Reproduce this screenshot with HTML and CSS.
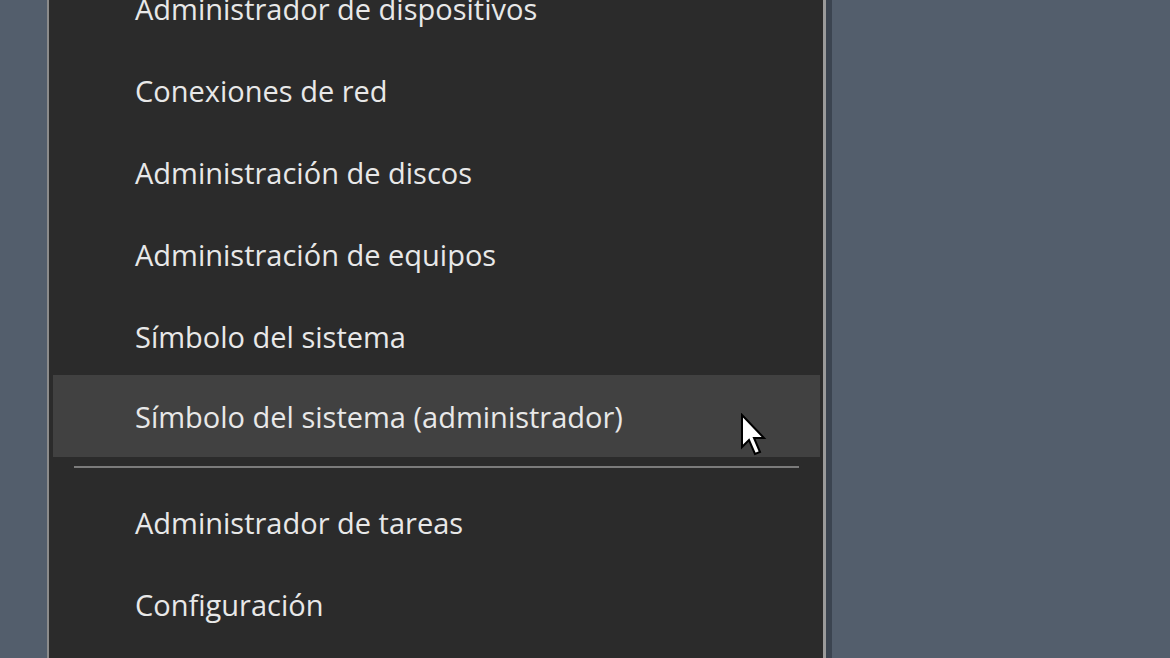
FILE: index.html
```html
<!DOCTYPE html>
<html lang="es">
<head>
<meta charset="utf-8">
<link rel="stylesheet" href="styles.css">
</head>
<body>
<div class="menu">
  <ul class="list">
    <li class="item">Administrador de dispositivos</li>
    <li class="item">Conexiones de red</li>
    <li class="item">Administración de discos</li>
    <li class="item">Administración de equipos</li>
    <li class="item">Símbolo del sistema</li>
    <li class="item hover">Símbolo del sistema (administrador)
      <svg class="cursor" width="30" height="46" viewBox="0 0 15 23">
        <path d="M1 1 L1 17 L4.5 13.5 L7.5 20.5 L10 19.5 L7 12.5 L12 12.5 Z" fill="#fff" stroke="#000" stroke-width="1" stroke-linejoin="miter"/>
      </svg>
    </li>
  </ul>
  <div class="sep"></div>
  <ul class="list">
    <li class="item">Administrador de tareas</li>
    <li class="item">Configuración</li>
  </ul>
</div>
</body>
</html>
```
FILE: styles.css
```css
html, body {
  margin: 0;
  padding: 0;
  height: 100%;
  overflow: hidden;
}
body {
  background: #535e6c;
  font-family: "Open Sans", "Noto Sans", sans-serif;
}
.menu {
  margin-top: -33px;
  margin-left: 47px;
  width: 767px;
  height: 740px;
  background: #2b2b2b;
  border-left: 2px solid #8b8b8b;
  border-right: 3px solid #9a9a9a;
  box-shadow: 6px 0 0 #3b4450;
  padding: 0 3px 0 4px;
  box-sizing: content-box;
}
.list {
  list-style: none;
  margin: 0;
  padding: 0;
}
.item {
  position: relative;
  height: 82px;
  display: flex;
  align-items: center;
  padding-left: 82px;
  color: #e8e8e8;
  font-size: 29px;
}
.item.hover {
  background: #414141;
  margin-top: -2px;
}
.cursor {
  position: absolute;
  left: 687px;
  top: 38px;
}
.sep {
  height: 24px;
  padding: 9px 21px 0;
  box-sizing: border-box;
}
.sep::before {
  content: "";
  display: block;
  width: 100%;
  height: 2px;
  background: #7b7b7b;
}
```
